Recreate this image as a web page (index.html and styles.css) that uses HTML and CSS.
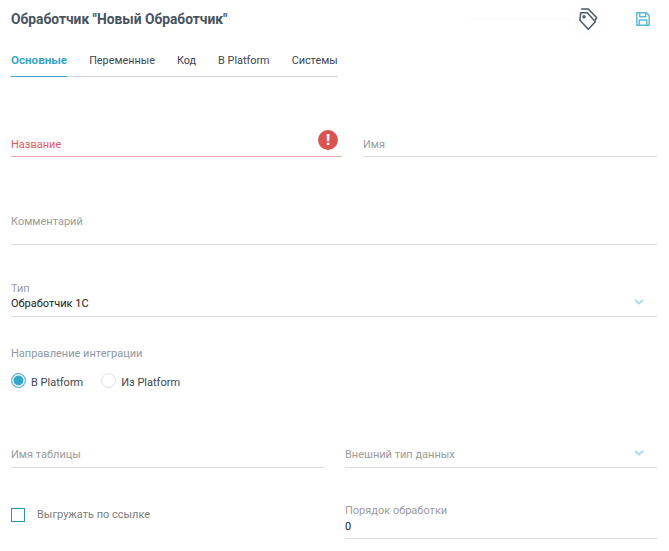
FILE: index.html
```html
<!DOCTYPE html>
<html lang="ru">
<head>
  <meta charset="UTF-8">
  <meta name="viewport" content="width=device-width, initial-scale=1.0">
  <title>Обработчик</title>
  <link rel="stylesheet" href="styles.css">
</head>
<body>
  <div class="page">
    <div class="header">
      <h1 class="title">Обработчик "Новый Обработчик"</h1>
      <div class="header-line"></div>
      <div class="tag-btn">
        <svg width="19" height="24" viewBox="0 0 19 24" fill="none" stroke="#4a5866" stroke-width="1.5" stroke-linejoin="round" stroke-linecap="round">
          <path d="M1.7 5.7 H8.3 L16.3 14.7 L9.3 22.3 L0.9 13.3 Z"/>
          <path d="M2.5 2 H9.3 L17.7 10.7 L16.3 13"/>
          <circle cx="5" cy="9.7" r="1"/>
        </svg>
      </div>
      <svg class="save-icon" width="14" height="14" viewBox="0 0 14 14" fill="none" stroke="#5bb7d6" stroke-width="1.4" stroke-linejoin="round">
        <path d="M0.8 0.8 H10.5 L13.2 3.5 V13.2 H0.8 Z"/>
        <path d="M3.7 0.8 V4.7 H9.8 V0.8"/>
        <path d="M3.2 13.2 V8 H10.8 V13.2"/>
      </svg>
    </div>

    <div class="tabs">
      <a class="tab tab-active">Основные</a>
      <a class="tab">Переменные</a>
      <a class="tab">Код</a>
      <a class="tab">В Platform</a>
      <a class="tab">Системы</a>
    </div>

    <div class="row row-name">
      <div class="field field-error field-name">
        <span class="placeholder">Название</span>
        <span class="error-badge">!</span>
      </div>
      <div class="field field-wide">
        <span class="placeholder">Имя</span>
      </div>
    </div>

    <div class="row row-comment">
      <div class="field field-wide field-comment">
        <span class="placeholder">Комментарий</span>
      </div>
    </div>

    <div class="row row-type">
      <div class="field field-wide field-filled">
        <span class="small-label">Тип</span>
        <span class="value">Обработчик 1С</span>
        <svg class="chevron" width="10" height="6" viewBox="0 0 10 6"><path d="M1 1 L5 4.5 L9 1" fill="none" stroke="#a5dcec" stroke-width="1.8"/></svg>
      </div>
    </div>

    <div class="direction">
      <div class="direction-label">Направление интеграции</div>
      <div class="radios">
        <label class="radio"><span class="radio-mark radio-on"></span>В Platform</label>
        <label class="radio"><span class="radio-mark"></span>Из Platform</label>
      </div>
    </div>

    <div class="row row-table">
      <div class="field field-half-left">
        <span class="placeholder">Имя таблицы</span>
      </div>
      <div class="field field-wide">
        <span class="placeholder">Внешний тип данных</span>
        <svg class="chevron" width="10" height="6" viewBox="0 0 10 6"><path d="M1 1 L5 4.5 L9 1" fill="none" stroke="#a5dcec" stroke-width="1.8"/></svg>
      </div>
    </div>

    <div class="row row-last">
      <div class="check-col">
        <span class="checkbox"></span>
        <span class="check-text">Выгружать по ссылке</span>
      </div>
      <div class="field field-wide field-filled field-order">
        <span class="small-label">Порядок обработки</span>
        <span class="value">0</span>
      </div>
    </div>
  </div>
</body>
</html>
```

FILE: styles.css
```css
body {
  margin: 0;
  padding: 0;
  background: #fff;
  font-family: Roboto, 'Liberation Sans', sans-serif;
  font-size: 11px;
  color: #333;
}

.page {
  padding: 0 12px 0 11px;
}

.header {
  display: flex;
  align-items: center;
  height: 38px;
}

.title {
  margin: 0;
  width: 217px;
  font-size: 13.8px;
  font-weight: 700;
  color: #47535f;
  white-space: nowrap;
}

.header-line {
  width: 101px;
  height: 1px;
  margin-left: 242px;
  background: #f5f5f5;
}

.tag-btn {
  display: flex;
  align-items: center;
  justify-content: center;
  width: 26px;
  height: 26px;
  margin-left: 4px;
  border-radius: 5px;
  box-shadow: 0 0 2px rgba(0, 0, 0, 0.06);
}

.save-icon {
  margin-left: 35px;
}

.tabs {
  display: flex;
  gap: 22px;
  width: 327px;
  height: 39px;
  box-sizing: border-box;
  border-bottom: 1px solid #d2d4d6;
}

.tab {
  height: 39px;
  box-sizing: border-box;
  padding-top: 16px;
  font-size: 10.85px;
  line-height: 14px;
  color: #3d4650;
  white-space: nowrap;
}

.tab-active {
  padding-top: 15px;
  color: #35a5cc;
  font-size: 11.6px;
  font-weight: 700;
  border-bottom: 1px solid #35a5cc;
}

.row {
  display: flex;
  gap: 21px;
}

.row-name {
  margin-top: 50px;
}

.row-name .field {
  padding-bottom: 4px;
}

.row-comment {
  margin-top: 48px;
}

.row-type {
  margin-top: 34px;
}

.row-table {
  margin-top: 47px;
}

.row-last {
  margin-top: 33px;
}

.field {
  position: relative;
  display: flex;
  flex-direction: column;
  justify-content: flex-end;
  height: 30px;
  box-sizing: border-box;
  padding-bottom: 5px;
  border-bottom: 1px solid #dcdcdc;
}

.field-wide {
  flex: 1;
}

.field-name {
  width: 331px;
}

.field-half-left {
  width: 313px;
}

.field-comment {
  height: 40px;
  padding-bottom: 15px;
}

.field-filled {
  height: 38px;
  padding-bottom: 5px;
}

.field-order {
  padding-bottom: 4px;
}

.field-order .small-label {
  margin-bottom: 2px;
}

.field-error {
  border-bottom-color: #f0aaaa;
}

.field-error .placeholder {
  color: #df5a60;
}

.placeholder {
  line-height: 14px;
  color: #9b9b9b;
}

.small-label {
  line-height: 14px;
  color: #9b9b9b;
  margin-bottom: 1px;
}

.value {
  line-height: 14px;
  color: #222;
}

.error-badge {
  position: absolute;
  top: 3px;
  right: 4px;
  width: 20px;
  height: 20px;
  border-radius: 50%;
  background: #d9534f;
  color: #fff;
  font-size: 15px;
  font-weight: 900;
  line-height: 20px;
  text-align: center;
}

.chevron {
  position: absolute;
  right: 13px;
  bottom: 11px;
}

.direction {
  margin-top: 30px;
}

.direction-label {
  line-height: 14px;
  color: #8c98a4;
}

.radios {
  display: flex;
  gap: 18px;
  margin-top: 14px;
}

.radio {
  display: flex;
  align-items: flex-start;
  gap: 5px;
  line-height: 16px;
  color: #3d4650;
}

.radio-mark {
  width: 15px;
  height: 15px;
  margin-top: -2px;
  box-sizing: border-box;
  border: 1px solid #e2e2e2;
  border-radius: 50%;
}

.radio-on {
  border-color: #5db5d3;
  background: #35a5cc;
  box-shadow: inset 0 0 0 1.5px #fff;
}

.check-col {
  display: flex;
  align-items: flex-start;
  width: 313px;
  padding-top: 7px;
}

.checkbox {
  width: 14px;
  height: 14px;
  box-sizing: border-box;
  border: 1px solid #2b94b5;
}

.check-text {
  margin-left: 12px;
  line-height: 14px;
  color: #7d7d7d;
}
```
